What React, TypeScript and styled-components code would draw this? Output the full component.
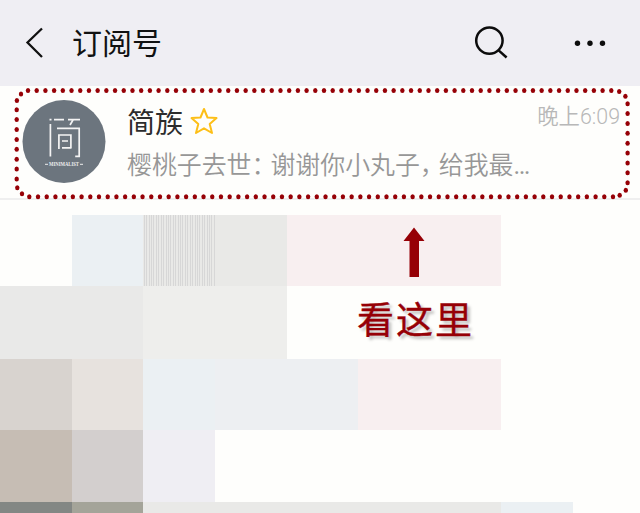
import React from 'react';
import styled, { createGlobalStyle } from 'styled-components';

type Point = [number, number];

type TileData = {
  col: number;
  row: number;
  span?: number;
  color: string;
  striped?: boolean;
};

const DARK_RED = '#960006';

const TILES: TileData[] = [
  { col: 2, row: 1, color: '#ebf0f3' },
  { col: 3, row: 1, color: '#e9e9e7', striped: true },
  { col: 4, row: 1, color: '#e9e9e7' },
  { col: 5, row: 1, span: 3, color: '#f8eff0' },
  { col: 1, row: 2, span: 2, color: '#e9e9e8' },
  { col: 3, row: 2, span: 2, color: '#eeeeec' },
  { col: 1, row: 3, color: '#d8d3cf' },
  { col: 2, row: 3, color: '#e7e2de' },
  { col: 3, row: 3, color: '#ebf0f3' },
  { col: 4, row: 3, span: 2, color: '#edeff2' },
  { col: 6, row: 3, span: 2, color: '#f8eff0' },
  { col: 1, row: 4, color: '#c6bdb4' },
  { col: 2, row: 4, color: '#d3cfce' },
  { col: 3, row: 4, color: '#efeef3' },
  { col: 1, row: 5, color: '#838784' },
  { col: 2, row: 5, color: '#a4a499' },
  { col: 3, row: 5, span: 5, color: '#e9e9e7' },
  { col: 8, row: 5, color: '#ebf0f3' },
];

// 1px lines inside a 29px wide repeat
const stripes = [0, 2, 4, 7, 9, 12, 14, 17, 19, 21, 24, 26]
  .map(x => `transparent ${x}px, #d7d7d7 ${x}px, #d7d7d7 ${x + 1}px, transparent ${x + 1}px`)
  .join(', ');

const range = (count: number, toPoint: (i: number) => Point) =>
  Array.from({ length: count }, (_, i) => toPoint(i));

const DOTS: Point[] = [
  ...range(68, i => [28 + i * 8.706, 90.4]),
  ...range(68, i => [29.3 + i * 8.712, 196.8]),
  ...range(8, i => [16.7, 109.7 + i * 9.9]),
  ...range(9, i => [627.6, 103.7 + i * 9.87]),
  [21, 94],
  [16.9, 100.6],
  [17.3, 187.7],
  [22, 193.8],
  [619.2, 91.6],
  [625.4, 96.2],
  [625.8, 190.3],
  [619.7, 195.3],
];

const GlobalStyle = createGlobalStyle`
  body {
    margin: 0;
    background: #fefefc;
    font-family: 'Noto Sans CJK SC', sans-serif;
  }

  p, h1, h2 {
    margin: 0;
    font-weight: 400;
  }
`;

const PageDiv = styled.div`
  position: relative;
  width: 640px;
  height: 513px;
  overflow: hidden;
  display: flex;
  flex-direction: column;
`;

const HeaderDiv = styled.header`
  box-sizing: border-box;
  flex: none;
  display: flex;
  align-items: center;
  height: 86px;
  padding: 0 32px 0 24px;
  background: #efeef3;
`;

const HeaderButton = styled.button<{ $gap?: number }>`
  display: flex;
  padding: 0;
  margin-right: ${({ $gap }) => $gap ?? 0}px;
  border: 0;
  background: transparent;
`;

const TitleH1 = styled.h1`
  flex: 1;
  padding-bottom: 4px;
  font-size: 30px;
  line-height: 44px;
  color: #111;
`;

const AccountDiv = styled.div`
  box-sizing: border-box;
  flex: none;
  display: flex;
  height: 114px;
  padding: 13px 20px 0 22px;
  border-bottom: 2px solid #efefef;
`;

const Avatar = styled.svg`
  flex: none;
  margin-right: 21px;
`;

const AccountBodyDiv = styled.div`
  flex: 1;
`;

const NameRowDiv = styled.div`
  display: flex;
  align-items: center;
  height: 44px;
`;

const NameH2 = styled.h2`
  font-size: 28px;
  line-height: 44px;
  color: #2c2c2c;
`;

const StarSvg = styled.svg`
  margin-left: 7px;
`;

const TimeP = styled.p`
  && {
    margin: -9px 0 0 auto;
    font-weight: 350;
  }
  font-family: Roboto, 'Noto Sans CJK SC', sans-serif;
  font-size: 21.4px;
  line-height: 30px;
  color: #b8b8b8;
`;

const PreviewP = styled.p`
  && {
    font-weight: 350;
  }
  font-size: 24.9px;
  line-height: 40px;
  color: #979797;
  white-space: nowrap;
`;

const NarrowSpan = styled.span`
  display: inline-block;
  width: 19px;
  font-feature-settings: 'halt';
`;

const DotsSpan = styled.span`
  font-family: Roboto, sans-serif;
  font-weight: 400;
`;

const MosaicDiv = styled.div`
  flex: none;
  display: grid;
  grid-template-columns: 72px 71px 72px 72px 71px 72px 71px 72px;
  grid-template-rows: 71px 73px 71px 72px 11px;
  margin-top: 15px;
`;

const TileDiv = styled.div<{ $tile: TileData }>`
  grid-column: ${({ $tile }) => $tile.col} / span ${({ $tile }) => $tile.span ?? 1};
  grid-row: ${({ $tile }) => $tile.row};
  background-color: ${({ $tile }) => $tile.color};
  ${({ $tile }) =>
    $tile.striped &&
    `
    background-image: linear-gradient(to right, ${stripes});
    background-size: 29px 100%;
    background-position: 6px 1px;
  `}
`;

const OutlineSvg = styled.svg`
  position: absolute;
  top: 0;
  left: 0;
`;

const HintDiv = styled.div`
  position: absolute;
  top: 227px;
  left: 357px;
  display: flex;
  flex-direction: column;
  align-items: center;
`;

const HintArrow = styled.svg`
  margin-right: 3px;
`;

const HintP = styled.p`
  && {
    margin-top: 14px;
  }
  font-size: 37px;
  line-height: 54px;
  letter-spacing: 2px;
  color: ${DARK_RED};
  -webkit-text-stroke: 0.4px ${DARK_RED};
  text-shadow: 3px 3px 3px rgba(0, 0, 0, 0.25);
`;

function AvatarLogo() {
  return (
    <Avatar width="84" height="84" viewBox="0 0 84 84">
      <circle cx="42" cy="42.5" r="41.5" fill="#6c757e" />
      <g fill="none" stroke="#f4f4f4" strokeWidth="1.7">
        <path d="M27.5 20.7h2M32 20.7h10M46 20.7h12M51 21l-3 5M28.4 25v32.5M35 29.3h22.2v28h-4" />
        <path d="M36.9 50V36h12v13.4M40 42h6M40 48.8h9" />
      </g>
      <path d="M23 65.3h3M58 65.3h3" stroke="#eee" />
      <text
        x="42"
        y="67.3"
        textAnchor="middle"
        textLength="30"
        lengthAdjust="spacingAndGlyphs"
        fill="#eee"
        fontFamily="Liberation Serif, serif"
        fontSize="5.5"
        fontWeight="bold"
      >
        MINIMALIST
      </text>
    </Avatar>
  );
}

export default function App() {
  return (
    <PageDiv>
      <GlobalStyle />

      <HeaderDiv>
        <HeaderButton $gap={28} aria-label="返回">
          <svg width="20" height="32" viewBox="0 0 20 32" fill="none" stroke="#111" strokeWidth="2.3">
            <path d="M18 1.5L3.5 15.5L18 30" />
          </svg>
        </HeaderButton>
        <TitleH1>订阅号</TitleH1>
        <HeaderButton $gap={66} aria-label="搜索">
          <svg width="34" height="34" viewBox="0 0 34 34" fill="none" stroke="#0c0c0c" strokeWidth="2.5">
            <circle cx="15.4" cy="14.6" r="13.2" />
            <path d="M24.6 24.4L32.6 31.5" />
          </svg>
        </HeaderButton>
        <HeaderButton aria-label="更多">
          <svg width="34" height="8" viewBox="0 0 34 8" fill="#0c0c0c">
            <circle cx="3.5" cy="4.3" r="2.7" />
            <circle cx="16" cy="4.3" r="2.7" />
            <circle cx="28.5" cy="4.3" r="2.7" />
          </svg>
        </HeaderButton>
      </HeaderDiv>

      <AccountDiv>
        <AvatarLogo />
        <AccountBodyDiv>
          <NameRowDiv>
            <NameH2>简族</NameH2>
            <StarSvg width="28" height="28" viewBox="0 0 28 28" fill="none" stroke="#fdbf17" strokeWidth="2">
              <path
                d="M14 2L17.5 10.5L26.5 11.1L19.7 17.1L22 26L14 21.3L6 26L8.3 17.1L1.5 11.1L10.5 10.5Z"
                strokeLinejoin="round"
              />
            </StarSvg>
            <TimeP>晚上6:09</TimeP>
          </NameRowDiv>
          <PreviewP>
            樱桃子去世<NarrowSpan>：</NarrowSpan>谢谢你小丸子<NarrowSpan>，</NarrowSpan>给我最
            <DotsSpan>…</DotsSpan>
          </PreviewP>
        </AccountBodyDiv>
      </AccountDiv>

      <MosaicDiv>
        {TILES.map(tile => (
          <TileDiv key={`${tile.row}-${tile.col}`} $tile={tile} />
        ))}
      </MosaicDiv>

      <OutlineSvg width="640" height="210" fill={DARK_RED}>
        {DOTS.map(([x, y]) => (
          <ellipse key={`${x}-${y}`} cx={x} cy={y} rx="2.2" ry="2.5" />
        ))}
      </OutlineSvg>

      <HintDiv>
        <HintArrow width="22" height="50" viewBox="0 0 22 50" fill={DARK_RED}>
          <path d="M11 0.5L21.5 14H16V50H6.5V14H0.5Z" />
        </HintArrow>
        <HintP>看这里</HintP>
      </HintDiv>
    </PageDiv>
  );
}
